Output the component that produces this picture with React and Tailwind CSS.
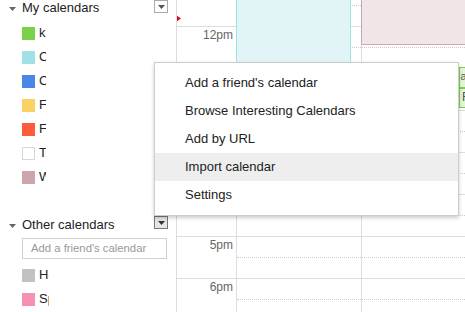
import React from 'react'

const myCals = [
    { name: 'kalender', color: 'bg-[#7bd148]' },
    { name: 'Contacts', color: 'bg-[#9fe1e7]' },
    { name: 'Chores', color: 'bg-[#4986e7]' },
    { name: 'Family', color: 'bg-[#fad165]' },
    { name: 'Fitness', color: 'bg-[#ff5a3c]' },
    { name: 'Tasks', color: 'bg-white border border-[#d6d6d6]' },
    { name: 'Work', color: 'bg-[#cca6ac]' },
]

const otherCals = [
    { name: 'Holidays', color: 'bg-[#c2c2c2]' },
    { name: 'Sports', color: 'bg-[#f691b2]' },
]

const hours = ['', '12pm', '1pm', '2pm', '3pm', '4pm', '5pm', '6pm', '7pm']

const menuItems = ['Add a friend\'s calendar', 'Browse Interesting Calendars', 'Add by URL', 'Import calendar', 'Settings']

const Caret = () => (
    <svg width="7" height="4" viewBox="0 0 7 4" className="absolute left-[9px] top-[7px]">
        <path d="M0 0h7L3.5 4z" fill="#666" />
    </svg>
)

const MenuButton = ({ active }) => (
    <div className={`absolute right-[8px] w-[14px] h-[13px] flex items-center justify-center border ${active ? 'border-[#777] bg-[#e6e6e6]' : 'border-[#aaa] bg-white'}`}>
        <svg width="7" height="4" viewBox="0 0 7 4">
            <path d="M0 0h7L3.5 4z" fill={active ? '#333' : '#555'} />
        </svg>
    </div>
)

const CalRow = ({ cal, clip }) => (
    <div className="h-[24px] flex items-center pl-[22px]">
        <div className={`w-[13px] h-[13px] box-border ${cal.color}`}></div>
        <div className={`ml-[4px] overflow-hidden whitespace-nowrap text-[13px] leading-[16px] text-[#222] ${clip}`}>{cal.name}</div>
    </div>
)

const App = () => {
    return (
        <div className="relative w-[465px] h-[312px] overflow-hidden bg-white flex font-['Liberation_Sans',Arial,sans-serif]">
            {/* sidebar */}
            <div className="w-[176px] shrink-0">
                <div className="relative h-[16px]">
                    <Caret />
                    <div className="pl-[22px] text-[13px] leading-[16px] text-[#222]">My calendars</div>
                    <div className="absolute top-0 right-0 w-full"><MenuButton /></div>
                </div>
                <div className="mt-[5px]">
                    {myCals.map((c) => <CalRow key={c.name} cal={c} clip="w-[7px]" />)}
                </div>
                <div className="relative h-[16px] mt-[28px]">
                    <Caret />
                    <div className="pl-[22px] text-[13px] leading-[16px] text-[#222]">Other calendars</div>
                    <div className="absolute top-[-1px] right-0 w-full"><MenuButton active /></div>
                </div>
                <div className="ml-[22px] mt-[5px] w-[145px] h-[21px] border border-[#d0d0d0] flex items-center pl-[8px] text-[11.3px] text-[#999] whitespace-nowrap">
                    Add a friend's calendar
                </div>
                <div className="mt-[4px]">
                    {otherCals.map((c) => <CalRow key={c.name} cal={c} clip="w-[10px]" />)}
                </div>
            </div>

            {/* calendar grid */}
            <div className="relative flex-1 border-l border-[#ddd] overflow-hidden">
                <div className="mt-[-16px]">
                    {hours.map((h, i) => (
                        <div key={i} className="flex h-[42px] border-t border-[#ddd] box-border">
                            <div className="w-[59px] shrink-0 pt-[1px] pr-[3px] text-right text-[12px] leading-[14px] text-[#666]">{h}</div>
                            <div className="w-[125px] shrink-0 border-l border-[#ddd] pt-[20px]">
                                <div className="border-t border-dotted border-[#ccc]"></div>
                            </div>
                            <div className="flex-1 border-l border-[#ddd] pt-[20px]">
                                <div className="border-t border-dotted border-[#ccc]"></div>
                            </div>
                        </div>
                    ))}
                </div>

                {/* events */}
                <div className="absolute left-[59px] top-[-2px] w-[115px] h-[196px] bg-[#e1f5f7] border border-[#9fe1e7]"></div>
                <div className="absolute left-[184px] top-[-2px] w-[120px] h-[47px] bg-[#f1e5e7] border border-[#cca6ac]"></div>
                <div className="absolute left-[282px] top-[67px] w-[40px] h-[21px] bg-[#e3f5d7] border border-[#7bd148] overflow-hidden">
                    <div className="ml-[-5px] text-[11px] leading-[16px] text-[#555]">Java</div>
                </div>
                <div className="absolute left-[282px] top-[88px] w-[40px] h-[20px] bg-[#e3f5d7] border border-[#7bd148] overflow-hidden">
                    <div className="ml-[2px] text-[12px] leading-[17px] text-[#555]">Fitness</div>
                </div>

                {/* current time marker */}
                <svg width="5" height="7" viewBox="0 0 5 7" className="absolute left-[-1px] top-[15px]">
                    <path d="M0 0L5 3.5L0 7z" fill="#d50f25" />
                </svg>
            </div>

            {/* dropdown menu */}
            <div className="absolute left-[154px] top-[62px] w-[305px] bg-white border border-[#ccc] py-[6px] shadow-[0_2px_4px_rgba(0,0,0,0.2)]">
                {menuItems.map((m) => (
                    <div key={m} className={`h-[28px] pl-[30px] text-[13px] leading-[28px] text-[#222] ${m === 'Import calendar' ? 'bg-[#eee]' : ''}`}>{m}</div>
                ))}
            </div>
        </div>
    )
}

export default App
